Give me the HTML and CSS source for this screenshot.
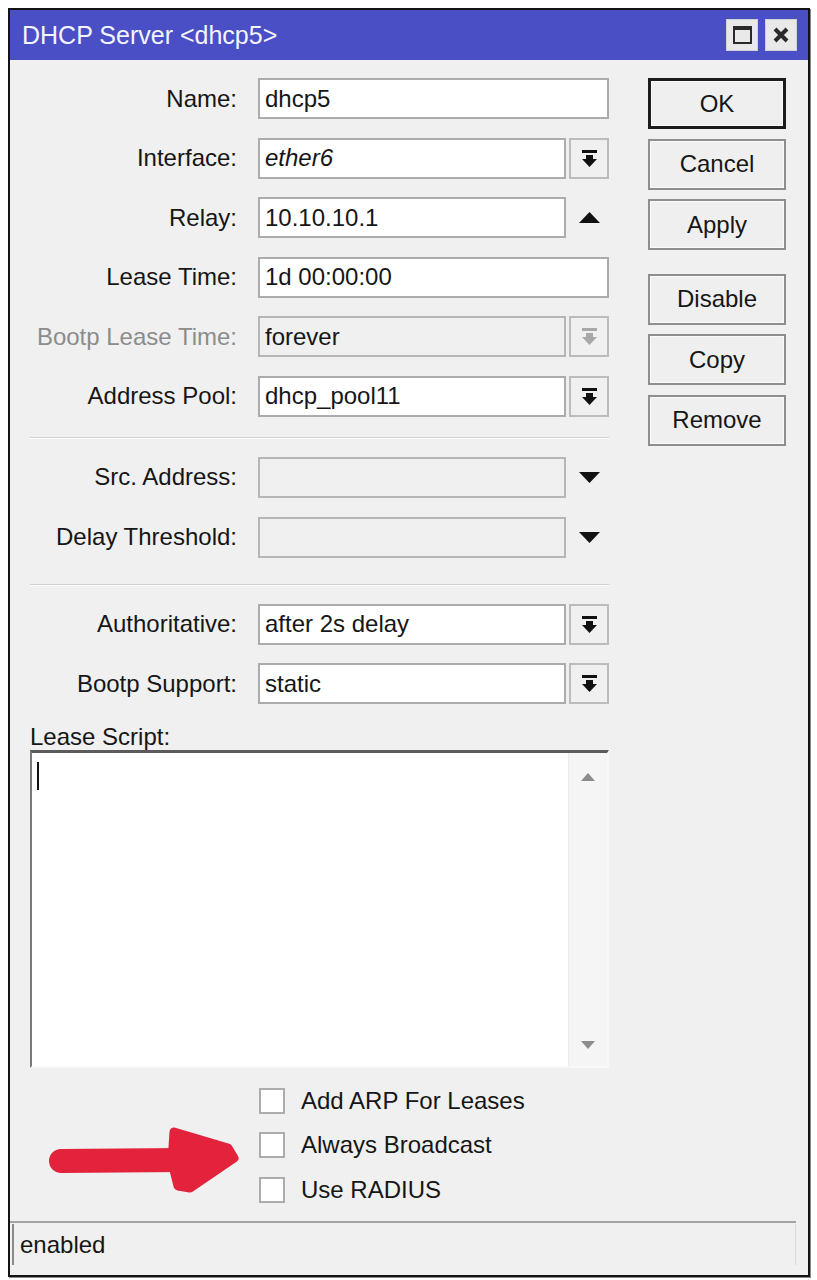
FILE: index.html
```html
<!DOCTYPE html>
<html lang="en">
<head>
    <meta charset="UTF-8">
    <title>DHCP Server &lt;dhcp5&gt;</title>
    <link rel="stylesheet" href="styles.css">
</head>
<body>
    <div class="window">
        <!-- Barra de titulo -->
        <div class="titlebar">
            <span class="title">DHCP Server &lt;dhcp5&gt;</span>
            <div class="title-buttons">
                <span class="tbtn"><span class="max-icon"></span></span>
                <span class="tbtn">
                    <svg width="16" height="16" viewBox="0 0 16 16"><path d="M2 2 L14 14 M14 2 L2 14" stroke="#2a2a2a" stroke-width="4"/></svg>
                </span>
            </div>
        </div>

        <div class="content">
            <!-- Formulario -->
            <div class="form">
                <div class="row">
                    <label class="label">Name:</label>
                    <div class="field"><div class="input">dhcp5</div></div>
                </div>
                <div class="row">
                    <label class="label">Interface:</label>
                    <div class="field">
                        <div class="input italic">ether6</div>
                        <span class="drop">
                            <svg width="15" height="17" viewBox="0 0 15 17"><rect x="0" y="0" width="15" height="3" fill="#111"/><path d="M4 5 H11 V9 H15 L7.5 17 L0 9 H4 Z" fill="#111"/></svg>
                        </span>
                    </div>
                </div>
                <div class="row">
                    <label class="label">Relay:</label>
                    <div class="field">
                        <div class="input">10.10.10.1</div>
                        <span class="arrow">
                            <svg width="21" height="11" viewBox="0 0 21 11"><path d="M0 11 L10.5 0 L21 11 Z" fill="#111"/></svg>
                        </span>
                    </div>
                </div>
                <div class="row">
                    <label class="label">Lease Time:</label>
                    <div class="field"><div class="input">1d 00:00:00</div></div>
                </div>
                <div class="row">
                    <label class="label disabled">Bootp Lease Time:</label>
                    <div class="field">
                        <div class="input off">forever</div>
                        <span class="drop">
                            <svg width="15" height="17" viewBox="0 0 15 17"><rect x="0" y="0" width="15" height="3" fill="#a8a8a8"/><path d="M4 5 H11 V9 H15 L7.5 17 L0 9 H4 Z" fill="#a8a8a8"/></svg>
                        </span>
                    </div>
                </div>
                <div class="row">
                    <label class="label">Address Pool:</label>
                    <div class="field">
                        <div class="input">dhcp_pool11</div>
                        <span class="drop">
                            <svg width="15" height="17" viewBox="0 0 15 17"><rect x="0" y="0" width="15" height="3" fill="#111"/><path d="M4 5 H11 V9 H15 L7.5 17 L0 9 H4 Z" fill="#111"/></svg>
                        </span>
                    </div>
                </div>

                <div class="separator"></div>

                <div class="row">
                    <label class="label">Src. Address:</label>
                    <div class="field">
                        <div class="input off"></div>
                        <span class="arrow">
                            <svg width="21" height="11" viewBox="0 0 21 11"><path d="M0 0 L21 0 L10.5 11 Z" fill="#111"/></svg>
                        </span>
                    </div>
                </div>
                <div class="row">
                    <label class="label">Delay Threshold:</label>
                    <div class="field">
                        <div class="input off"></div>
                        <span class="arrow">
                            <svg width="21" height="11" viewBox="0 0 21 11"><path d="M0 0 L21 0 L10.5 11 Z" fill="#111"/></svg>
                        </span>
                    </div>
                </div>

                <div class="separator second"></div>

                <div class="row">
                    <label class="label">Authoritative:</label>
                    <div class="field">
                        <div class="input">after 2s delay</div>
                        <span class="drop">
                            <svg width="15" height="17" viewBox="0 0 15 17"><rect x="0" y="0" width="15" height="3" fill="#111"/><path d="M4 5 H11 V9 H15 L7.5 17 L0 9 H4 Z" fill="#111"/></svg>
                        </span>
                    </div>
                </div>
                <div class="row">
                    <label class="label">Bootp Support:</label>
                    <div class="field">
                        <div class="input">static</div>
                        <span class="drop">
                            <svg width="15" height="17" viewBox="0 0 15 17"><rect x="0" y="0" width="15" height="3" fill="#111"/><path d="M4 5 H11 V9 H15 L7.5 17 L0 9 H4 Z" fill="#111"/></svg>
                        </span>
                    </div>
                </div>

                <!-- Script -->
                <div class="script-label">Lease Script:</div>
                <div class="script-box">
                    <div class="script-text"><span class="cursor"></span></div>
                    <div class="scrollbar">
                        <svg width="14" height="8" viewBox="0 0 14 8"><path d="M0 8 L7 0 L14 8 Z" fill="#8c8c8c"/></svg>
                        <svg width="14" height="8" viewBox="0 0 14 8"><path d="M0 0 L14 0 L7 8 Z" fill="#8c8c8c"/></svg>
                    </div>
                </div>

                <!-- Opciones -->
                <div class="checks">
                    <div class="check"><span class="box"></span>Add ARP For Leases</div>
                    <div class="check"><span class="box"></span>Always Broadcast</div>
                    <div class="check"><span class="box"></span>Use RADIUS</div>
                </div>
            </div>

            <!-- Botones -->
            <div class="actions">
                <button class="btn default">OK</button>
                <button class="btn">Cancel</button>
                <button class="btn">Apply</button>
                <button class="btn spaced">Disable</button>
                <button class="btn">Copy</button>
                <button class="btn">Remove</button>
            </div>
        </div>

        <div class="statusbar">
            <div class="status">enabled</div>
        </div>

        <!-- Flecha roja encima -->
        <svg class="red-arrow" width="205" height="80" viewBox="0 0 205 80">
            <path d="M21 41 L140 40" stroke="#e2233b" stroke-width="24" stroke-linecap="round" fill="none"/>
            <path d="M134 12 L188 28 L194 38 L150 68 L138 66 L132 42 Z" fill="#e2233b" stroke="#e2233b" stroke-width="9" stroke-linejoin="round"/>
        </svg>
    </div>
</body>
</html>
```

FILE: styles.css
```css
body {
    margin: 0;
    background: #ffffff;
    font-family: "Liberation Sans", Arial, sans-serif;
    font-size: 24px;
    color: #161616;
}
/*Ventana*/
.window {
    position: relative;
    margin: 8px;
    width: 798px;
    height: 1265px;
    border: 2px solid #141414;
    background: #f0f0f0;
    display: flex;
    flex-direction: column;
    box-shadow: 1px 1px 0 #8a8a8a;
}
.titlebar {
    height: 50px;
    flex-shrink: 0;
    background: #4a4fc6;
    display: flex;
    align-items: center;
    justify-content: space-between;
    padding: 0 11px 0 12px;
}
.title {
    color: #f4f4ff;
    font-size: 25px;
}
.title-buttons {
    display: flex;
    gap: 7px;
}
.tbtn {
    width: 32px;
    height: 32px;
    box-sizing: border-box;
    background: #e9e9e9;
    border: 1px solid #d2d2d2;
    display: flex;
    align-items: center;
    justify-content: center;
}
.max-icon {
    width: 19px;
    height: 18px;
    box-sizing: border-box;
    border: 2px solid #2a2a2a;
    border-top-width: 4px;
}
/*Contenido*/
.content {
    flex: 1;
    display: flex;
    padding: 18px 0 0 20px;
}
.form {
    width: 579px;
}
.row {
    display: flex;
    align-items: center;
    height: 41px;
    margin-bottom: 18.6px;
}
.label {
    width: 207px;
    margin-right: 21px;
    text-align: right;
    white-space: nowrap;
}
.label.disabled {
    color: #8c8c8c;
}
.field {
    width: 351px;
    height: 41px;
    display: flex;
    gap: 3px;
}
.input {
    flex: 1;
    box-sizing: border-box;
    height: 41px;
    border: 2px solid #acacac;
    background: #ffffff;
    padding: 0 5px;
    display: flex;
    align-items: center;
    white-space: nowrap;
}
.input.italic {
    font-style: italic;
}
.input.off {
    background: #f0f0f0;
    border-color: #b6b6b6;
}
.drop {
    width: 40px;
    box-sizing: border-box;
    border: 2px solid #bcbcbc;
    display: flex;
    align-items: center;
    justify-content: center;
}
.arrow {
    width: 40px;
    display: flex;
    align-items: center;
    justify-content: center;
}
/*Las lineas separadoras (los margenes se juntan con los de las filas)*/
.separator {
    height: 1px;
    border-bottom: 1px solid #ffffff;
    background: #d2d2d2;
    margin: 20px 0 18px 0;
}
.separator.second {
    margin-top: 26px;
}
/*Script*/
.script-label {
    line-height: 27px;
}
.script-box {
    height: 318px;
    box-sizing: border-box;
    display: flex;
    background: #ffffff;
    border-top: 3px solid #5c5c5c;
    border-left: 2px solid #7a7a7a;
    border-right: 2px solid #f8f8f8;
    border-bottom: 2px solid #f8f8f8;
}
.script-text {
    flex: 1;
    padding: 9px 0 0 5px;
}
.cursor {
    display: block;
    width: 2px;
    height: 28px;
    background: #111;
}
.scrollbar {
    width: 38px;
    background: #f5f5f5;
    border-left: 1px solid #ececec;
    display: flex;
    flex-direction: column;
    justify-content: space-between;
    align-items: center;
    padding: 20px 0 17px 0;
}
/*Casillas*/
.checks {
    margin-top: 20px;
    padding-left: 229px;
    display: flex;
    flex-direction: column;
    gap: 18.5px;
}
.check {
    display: flex;
    align-items: center;
    height: 26px;
    white-space: nowrap;
}
.box {
    width: 26px;
    height: 26px;
    box-sizing: border-box;
    border: 2px solid #acacac;
    background: #ffffff;
    margin-right: 16px;
}
/*Botones*/
.actions {
    margin-left: 39px;
    display: flex;
    flex-direction: column;
    gap: 9.5px;
}
.btn {
    width: 138px;
    height: 51px;
    box-sizing: border-box;
    border: 2px solid #8e8e8e;
    background: #efefef;
    box-shadow: inset 0 0 0 1px #fafafa;
    font-family: "Liberation Sans", Arial, sans-serif;
    font-size: 24px;
    color: #161616;
    padding: 0;
}
.btn.default {
    border: 3px solid #1c1c1c;
}
.btn.spaced {
    margin-top: 14px;
}
/*Barra de estado*/
.statusbar {
    height: 51px;
    flex-shrink: 0;
    margin-right: 12px;
    border-top: 2px solid #a4a4a4;
    padding: 1px 0 0 2px;
}
.status {
    height: 41px;
    box-sizing: border-box;
    border-left: 2px solid #8a8a8a;
    border-right: 1px solid #dadada;
    padding-left: 6px;
    display: flex;
    align-items: center;
}
.red-arrow {
    position: absolute;
    left: 30px;
    top: 1110px;
}
```
